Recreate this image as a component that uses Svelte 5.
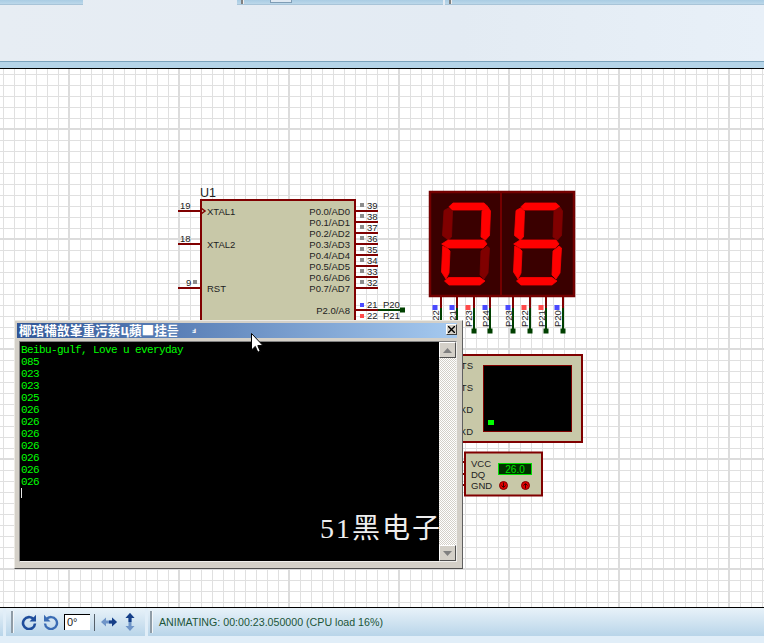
<script>
  const minorX = Array.from({ length: 70 }, (_, i) => 3 + i * 11);
  const minorY = Array.from({ length: 50 }, (_, i) => 74 + i * 11);
  const majorX = [69, 179, 289, 399, 509, 619, 729];
  const majorY = [129, 239, 349, 459, 569];

  const ports = ['P0.0/AD0', 'P0.1/AD1', 'P0.2/AD2', 'P0.3/AD3', 'P0.4/AD4', 'P0.5/AD5', 'P0.6/AD6', 'P0.7/AD7'];
  const portPins = ports.map((label, i) => ({ label, num: 39 - i, y: 211 + i * 11 }));
  const leftPins = [
    { num: '19', label: 'XTAL1', y: 211, x: 180 },
    { num: '18', label: 'XTAL2', y: 244, x: 180 },
    { num: '9', label: 'RST', y: 288, x: 186 }
  ];

  const segs = {
    a: '449,206.7 453,203 484,203 488,206.7 484,210 452,210',
    f: '444,210.5 449,207.7 452.5,211 451.5,237 448.3,240 442.5,235.5',
    b: '488,207 490.5,211 489.5,235.5 485.5,240 481,237 482,211',
    g: '441.7,244 448,240 484,240 487,244 483,248 448,248',
    e: '442.7,246 447.5,248.5 450,251 449,273 446,279 441.5,272',
    c: '487,246 489.5,248 488,273 484,279 480,275 481,251',
    d: '444.5,281 448.5,277.5 480,277.5 485,281 480,285 449,285'
  };
  const digits = [
    { dx: 0, lit: 'abged' },
    { dx: 72, lit: 'afgecd' }
  ];
  const segKeys = Object.keys(segs);

  const segPins = [
    { x: 441, sx: 435, c: '#4a4aff', t: 'P22' },
    { x: 457, sx: 452, c: '#4a4aff', t: 'P21' },
    { x: 474, sx: 468, c: '#ff4a4a', t: 'P23' },
    { x: 490, sx: 485, c: '#4a4aff', t: 'P24' },
    { x: 513, sx: 508, c: '#4a4aff', t: 'P23' },
    { x: 530, sx: 524, c: '#ff4a4a', t: 'P22' },
    { x: 546, sx: 541, c: '#ff4a4a', t: 'P21' },
    { x: 563, sx: 557, c: '#4a4aff', t: 'P20' }
  ];

  const lcdLabels = [
    { t: 'RTS', y: 369 },
    { t: 'CTS', y: 391 },
    { t: 'TXD', y: 413 },
    { t: 'RXD', y: 435 }
  ];
  const sensorRows = [
    { t: 'VCC', y: 467, pin: 462 },
    { t: 'DQ', y: 478, pin: 474 },
    { t: 'GND', y: 489, pin: 485 }
  ];
  const output = ['085', '023', '023', '025', '026', '026', '026', '026', '026', '026', '026'];
</script>

<div class="app">
  <header class="ribbon">
    <div class="tabs">
      <div class="tab first"></div>
      <div class="tab second"><i class="grip"></i><i class="mini"></i></div>
      <div class="tab third"><i class="grip"></i></div>
    </div>
  </header>
  <div class="band"></div>

  <main class="canvas">
    <svg class="sheet" viewBox="0 69 764 538" width="764" height="538">
      <g stroke="#e0e0e0" stroke-width="1">
        {#each minorX as x}<line x1={x + 0.5} y1="69" x2={x + 0.5} y2="607" />{/each}
        {#each minorY as y}<line x1="0" y1={y + 0.5} x2="764" y2={y + 0.5} />{/each}
      </g>
      <g stroke="#dcdcdc" stroke-width="2">
        {#each majorX as x}<line x1={x} y1="69" x2={x} y2="607" />{/each}
        {#each majorY as y}<line x1="0" y1={y} x2="764" y2={y} />{/each}
      </g>

      <!-- U1 microcontroller -->
      <rect x="201" y="200" width="154" height="210" fill="#c8c8a8" stroke="#800000" stroke-width="2" />
      <text x="200" y="197" class="t12">U1</text>
      {#each leftPins as p}
        <line x1="178" y1={p.y} x2="200" y2={p.y} class="pin" />
        <text x={p.x} y={p.y - 2} class="t9">{p.num}</text>
        <text x="207" y={p.y + 4} class="t9">{p.label}</text>
      {/each}
      <path d="M201 208 L205 211 L201 214" fill="none" stroke="#800000" stroke-width="1.5" />
      <rect x="193" y="280" width="4" height="4" fill="#8c8c8c" />
      {#each portPins as p}
        <line x1="356" y1={p.y} x2="378" y2={p.y} class="pin" />
        <rect x="360" y={p.y - 8} width="4" height="4" fill="#8c8c8c" />
        <text x="367" y={p.y - 2} class="t9">{p.num}</text>
        <text x="350" y={p.y + 4} class="t9" text-anchor="end">{p.label}</text>
      {/each}
      <text x="350" y="314" class="t9" text-anchor="end">P2.0/A8</text>
      <line x1="356" y1="310" x2="378" y2="310" class="pin" />
      <line x1="378" y1="310" x2="403" y2="310" class="wire" />
      <rect x="400" y="307.5" width="5" height="5" fill="#004000" />
      <rect x="360" y="303" width="4" height="4" fill="#4a4aff" />
      <text x="367" y="308" class="t9">21</text>
      <text x="383" y="308" class="t9">P20</text>
      <line x1="356" y1="321" x2="378" y2="321" class="pin" />
      <rect x="360" y="314" width="4" height="4" fill="#ff4a4a" />
      <text x="367" y="319" class="t9">22</text>
      <text x="383" y="319" class="t9">P21</text>

      <!-- seven segment display -->
      <rect x="430" y="192" width="144" height="104" fill="#3a0000" stroke="#740000" stroke-width="2.5" />
      <line x1="501" y1="192" x2="501" y2="296" stroke="#740000" stroke-width="2" />
      {#each digits as d}
        <g transform={`translate(${d.dx} 0)`}>
          {#each segKeys as k}
            <polygon
              points={segs[k]}
              fill={d.lit.includes(k) ? '#ff0000' : '#800000'}
              stroke={d.lit.includes(k) ? '#ff0000' : '#800000'}
              stroke-width="0.8"
            />
          {/each}
        </g>
      {/each}
      {#each segPins as p}
        <line x1={p.x} y1="297" x2={p.x} y2="308" stroke="#800000" stroke-width="2" />
        <line x1={p.x} y1="308" x2={p.x} y2="331" stroke="#004000" stroke-width="2" />
        <rect x={p.x - 2.5} y="328.5" width="5" height="5" fill="#004000" />
        <rect x={p.sx - 2.5} y="305" width="5" height="5" fill={p.c} />
        <text class="t9" transform={`translate(${p.sx + 3.5} 327) rotate(-90)`}>{p.t}</text>
      {/each}

      <!-- LCD module -->
      <rect x="420" y="355" width="162" height="87" fill="#c8c8a8" stroke="#800000" stroke-width="2" />
      <rect x="483.5" y="365.5" width="88" height="66" fill="#000" stroke="#800000" />
      <rect x="488" y="420" width="6" height="5" fill="#00ff00" />
      {#each lcdLabels as l}
        <text x="473" y={l.y} class="t9" text-anchor="end">{l.t}</text>
      {/each}

      <!-- temperature sensor -->
      {#each sensorRows as r}
        <line x1="458" y1={r.pin} x2="465" y2={r.pin} class="pin" />
      {/each}
      <rect x="465" y="452.5" width="77" height="43" fill="#c8c8a8" stroke="#800000" stroke-width="2" />
      {#each sensorRows as r}
        <text x="471" y={r.y} class="t9">{r.t}</text>
      {/each}
      <rect x="498.5" y="463.5" width="33" height="11" fill="#003000" stroke="#00e000" />
      <text x="515" y="472.5" class="lcdnum" text-anchor="middle">26.0</text>
      {#each [503.5, 525.5] as cx, i}
        <circle {cx} cy="485.5" r="4" fill="#e00000" stroke="#800000" />
        <path d={i === 0 ? `M${cx} 482.5V487M${cx - 2} 485.5L${cx} 487.5L${cx + 2} 485.5` : `M${cx} 488.5V484M${cx - 2} 485.5L${cx} 483.5L${cx + 2} 485.5`} fill="none" stroke="#400000" />
      {/each}
    </svg>

    <section class="window">
      <div class="titlebar">
        <span class="title">椰琯犕敨峯重污蔡ц蘋■挂듣</span>
        <span class="title-mark">ⅎ</span>
        <button class="close" aria-label="Close">
          <svg viewBox="0 0 7 7" width="7" height="7"><path d="M0 0L7 7M7 0L0 7" stroke="#000" stroke-width="1.4" /></svg>
        </button>
      </div>
      <div class="client">
        <div class="terminal">
          <div>Beibu-gulf, Love u everyday</div>
          {#each output as line}<div>{line}</div>{/each}
          <div class="caret"></div>
          <div class="watermark">51黑电子</div>
        </div>
        <div class="scrollbar">
          <div class="sbtn"><svg viewBox="0 0 9 5" width="9" height="5"><path d="M4.5 0L9 5H0Z" fill="#808080" /></svg></div>
          <div class="track"></div>
          <div class="sbtn"><svg viewBox="0 0 9 5" width="9" height="5"><path d="M0 0H9L4.5 5Z" fill="#808080" /></svg></div>
        </div>
      </div>
    </section>

    <svg class="cursor" viewBox="0 0 13 20" width="13" height="20">
      <path d="M0.5 0.5V17L4.3 13.4L6.8 19.2L9.2 18.2L6.8 12.6H12Z" fill="#fff" stroke="#000" />
    </svg>
  </main>

  <footer class="status">
    <div class="statusrow">
      <div class="group stub"></div>
      <div class="group tools">
        <i class="grip-v"></i>
        <svg class="ico" viewBox="0 0 16 16" width="16" height="16">
          <path d="M12.6 5.2A6 6 0 1 0 14 9.5" fill="none" stroke="#1f4e9c" stroke-width="2.6" />
          <path d="M15 0.8V7.4H8.5Z" fill="#1f4e9c" />
        </svg>
        <svg class="ico" viewBox="0 0 16 16" width="16" height="16">
          <path d="M3.4 5.2A6 6 0 1 1 2 9.5" fill="none" stroke="#3a6cb4" stroke-width="2.4" />
          <path d="M1 0.8V7.4H7.5Z" fill="#3a6cb4" />
        </svg>
        <div class="angle">0°</div>
        <i class="sep"></i>
        <svg class="ico wide" viewBox="0 0 16 10" width="16" height="10">
          <path d="M0 5L5 0.5V3.5H11V0.5L16 5L11 9.5V6.5H5V9.5Z" fill="#6f95c8" />
          <path d="M8 3.5H11V0.5L16 5L11 9.5V6.5H8Z" fill="#163f88" />
        </svg>
        <svg class="ico" viewBox="0 0 10 18" width="10" height="18">
          <path d="M5 0L9.5 5H6.5V13H9.5L5 18L0.5 13H3.5V5H0.5Z" fill="#6f95c8" />
          <path d="M5 0L9.5 5H6.5V9H3.5V5H0.5Z" fill="#163f88" />
        </svg>
      </div>
      <div class="group message">
        <i class="grip-v"></i>
        <span class="msg">ANIMATING: 00:00:23.050000 (CPU load 16%)</span>
      </div>
    </div>
    <div class="statusfoot"></div>
  </footer>
</div>

<style>
  :global(body) {
    margin: 0;
    overflow: hidden;
  }
  .app {
    width: 764px;
    height: 643px;
    display: flex;
    flex-direction: column;
    font-family: "Liberation Sans", Arial, sans-serif;
    overflow: hidden;
    background: #fff;
  }
  .ribbon {
    height: 61px;
    background: linear-gradient(90deg, #e7edf3, #e3ebf3 60%, #e8f0f8);
    flex: none;
  }
  .tabs {
    display: flex;
    height: 5px;
  }
  .tab {
    position: relative;
    background: linear-gradient(#a9cce3, #bcd8ea);
    border-bottom: 1px solid #a8c4d8;
    box-sizing: border-box;
  }
  .first {
    width: 83px;
    margin-right: 154px;
  }
  .second {
    width: 206px;
    margin-right: 2px;
  }
  .third {
    flex: 1;
  }
  .grip {
    position: absolute;
    left: 4px;
    top: 0;
    width: 2px;
    height: 4px;
    background: #808080;
    border-right: 1px solid #eee;
  }
  .mini {
    position: absolute;
    left: 33px;
    top: 0;
    width: 20px;
    height: 2px;
    background: #dfe9f2;
    border: 1px solid #7f9db5;
    border-top: 0;
  }
  .band {
    flex: none;
    height: 6px;
    background: #b5d4e8;
    border-top: 1px solid #7ba3bd;
    border-bottom: 1px solid #000;
  }
  .canvas {
    position: relative;
    flex: 1;
    min-height: 0;
    background: #fff;
  }
  .sheet {
    position: absolute;
    inset: 0;
    display: block;
  }
  .pin {
    stroke: #800000;
    stroke-width: 2;
  }
  .wire {
    stroke: #004000;
    stroke-width: 2;
  }
  .t9 {
    font-size: 9.5px;
    fill: #222;
  }
  .t12 {
    font-size: 12.5px;
    fill: #222;
  }
  .lcdnum {
    font-size: 10px;
    fill: #00e000;
  }
  .window {
    position: absolute;
    left: 14px;
    top: 251px;
    width: 449px;
    height: 249px;
    box-sizing: border-box;
    padding: 2px 5px 6px 2px;
    display: flex;
    flex-direction: column;
    background: #d4d0c8;
    border: 1px solid;
    border-color: #eceae4 #606060 #505050 #eceae4;
  }
  .titlebar {
    flex: none;
    height: 15px;
    position: relative;
    display: flex;
    align-items: center;
    padding-left: 2px;
    background: linear-gradient(90deg, #2f5596, #a6caf0);
    color: #fff;
  }
  .title {
    font-family: "Noto Sans CJK SC", sans-serif;
    font-size: 12.7px;
    font-weight: 700;
    line-height: 1;
    white-space: nowrap;
  }
  .title-mark {
    font-size: 8px;
    line-height: 1;
    margin-left: 13px;
    font-weight: 700;
  }
  .close {
    position: absolute;
    right: 0;
    top: 1px;
    width: 11px;
    height: 11px;
    padding: 0;
    display: flex;
    align-items: center;
    justify-content: center;
    background: #d4d0c8;
    border: 1px solid;
    border-color: #fff #404040 #404040 #fff;
  }
  .client {
    flex: 1;
    min-height: 0;
    margin-top: 3px;
    margin-left: 2px;
    display: flex;
    border: 1px solid;
    border-color: #808080 #f0efec #f0efec #808080;
  }
  .terminal {
    position: relative;
    flex: 1;
    min-width: 0;
    background: #000;
    color: #00ff00;
    font-family: "Liberation Mono", monospace;
    font-size: 11px;
    letter-spacing: -0.6px;
    line-height: 12px;
    padding: 2px 0 0 1px;
    box-sizing: border-box;
  }
  .caret {
    width: 1px;
    height: 10px;
    background: #e8e8e8;
  }
  .watermark {
    position: absolute;
    left: 300px;
    top: 169px;
    color: #eee;
    font-family: "Liberation Serif", "Noto Sans CJK SC", serif;
    font-size: 28px;
    letter-spacing: 2px;
    line-height: 36px;
    font-weight: 400;
    white-space: nowrap;
  }
  .scrollbar {
    flex: none;
    width: 17px;
    display: flex;
    flex-direction: column;
  }
  .sbtn {
    flex: none;
    height: 16px;
    box-sizing: border-box;
    display: flex;
    align-items: center;
    justify-content: center;
    background: #d4d0c8;
    border: 1px solid;
    border-color: #fff #505050 #505050 #fff;
  }
  .track {
    flex: 1;
    background-color: #f4f3f0;
    background-image: repeating-conic-gradient(#d4d0c8 0 25%, #fff 0 50%);
    background-size: 2px 2px;
  }
  .cursor {
    position: absolute;
    left: 251px;
    top: 264px;
  }
  .status {
    flex: none;
    height: 36px;
    border-top: 1px solid #000;
    box-sizing: border-box;
    display: flex;
    flex-direction: column;
    background: #e1eef8;
  }
  .statusrow {
    flex: none;
    height: 28px;
    display: flex;
    gap: 3px;
  }
  .group {
    display: flex;
    align-items: center;
    background: linear-gradient(#e8f2f9, #b9d5e9);
  }
  .stub {
    width: 3px;
  }
  .tools {
    width: 139px;
    padding-left: 5px;
    box-sizing: border-box;
  }
  .message {
    flex: 1;
    padding-left: 2px;
  }
  .grip-v {
    flex: none;
    width: 2px;
    height: 22px;
    background: #8f9ca6;
    border-right: 1px solid #f2f6f9;
  }
  .ico {
    flex: none;
  }
  .tools .ico:nth-of-type(1) {
    margin-left: 7px;
  }
  .tools .ico:nth-of-type(2) {
    margin-left: 6px;
  }
  .angle {
    flex: none;
    margin-left: 5px;
    width: 26px;
    height: 16px;
    box-sizing: border-box;
    background: #fff;
    border-top: 1px solid #000;
    border-left: 1px solid #000;
    font-size: 11px;
    line-height: 14px;
    padding-left: 2px;
    color: #222;
  }
  .sep {
    flex: none;
    width: 1px;
    height: 17px;
    margin-left: 4px;
    background: #55606a;
  }
  .tools .ico:nth-of-type(3) {
    margin-left: 6px;
  }
  .tools .ico:nth-of-type(4) {
    margin-left: 8px;
  }
  .msg {
    margin-left: 6px;
    font-size: 10.65px;
    color: #1b5538;
    white-space: nowrap;
  }
  .statusfoot {
    flex: 1;
  }
</style>
